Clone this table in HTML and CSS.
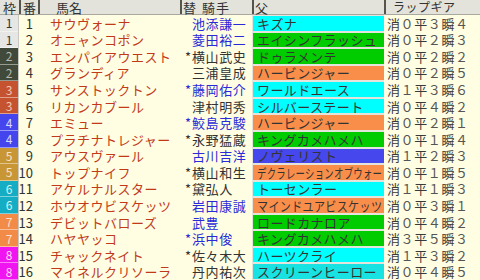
FILE: index.html
```html
<!DOCTYPE html>
<html lang="ja">
<head>
<meta charset="utf-8">
<link rel="stylesheet" href="styles.css">
</head>
<body>
<div class="board">
  <div class="row head">
    <div class="h h-waku">枠</div>
    <div class="h h-ban">番</div>
    <div class="h h-name">馬名</div>
    <div class="h h-jockey"><span class="h-mark">替</span><span class="h-jk">騎手</span></div>
    <div class="h h-sire">父</div>
    <div class="h h-gear">ラップギア</div>
  </div>

  <div class="row"><div class="waku w1">1</div><div class="ban">1</div><div class="name">サウヴォーナ</div><div class="jockey blue"><span class="mark"></span>池添謙一</div><div class="sire-cell"><div class="sire cyan"><span class="st">キズナ</span></div></div><div class="gear">消<i>０</i>平<i>３</i>瞬<i>４</i></div></div>
  <div class="row"><div class="waku w1">1</div><div class="ban">2</div><div class="name">オニャンコポン</div><div class="jockey blue"><span class="mark"></span>菱田裕二</div><div class="sire-cell"><div class="sire green"><span class="st">エイシンフラッシュ</span></div></div><div class="gear">消<i>０</i>平<i>２</i>瞬<i>３</i></div></div>
  <div class="row"><div class="waku w2">2</div><div class="ban">3</div><div class="name">エンパイアウエスト</div><div class="jockey"><span class="mark">*</span>横山武史</div><div class="sire-cell"><div class="sire green"><span class="st">ドゥラメンテ</span></div></div><div class="gear">消<i>０</i>平<i>２</i>瞬<i>２</i></div></div>
  <div class="row"><div class="waku w2">2</div><div class="ban">4</div><div class="name">グランディア</div><div class="jockey"><span class="mark"></span>三浦皇成</div><div class="sire-cell"><div class="sire orange"><span class="st">ハービンジャー</span></div></div><div class="gear">消<i>０</i>平<i>２</i>瞬<i>５</i></div></div>
  <div class="row"><div class="waku w3">3</div><div class="ban">5</div><div class="name">サンストックトン</div><div class="jockey blue"><span class="mark">*</span>藤岡佑介</div><div class="sire-cell"><div class="sire cyan"><span class="st">ワールドエース</span></div></div><div class="gear">消<i>１</i>平<i>３</i>瞬<i>６</i></div></div>
  <div class="row"><div class="waku w3">3</div><div class="ban">6</div><div class="name">リカンカブール</div><div class="jockey"><span class="mark"></span>津村明秀</div><div class="sire-cell"><div class="sire cyan"><span class="st">シルバーステート</span></div></div><div class="gear">消<i>０</i>平<i>４</i>瞬<i>２</i></div></div>
  <div class="row"><div class="waku w4">4</div><div class="ban">7</div><div class="name">エミュー</div><div class="jockey blue"><span class="mark">*</span>鮫島克駿</div><div class="sire-cell"><div class="sire orange"><span class="st">ハービンジャー</span></div></div><div class="gear">消<i>０</i>平<i>２</i>瞬<i>１</i></div></div>
  <div class="row"><div class="waku w4">4</div><div class="ban">8</div><div class="name">プラチナトレジャー</div><div class="jockey"><span class="mark">*</span>永野猛蔵</div><div class="sire-cell"><div class="sire green"><span class="st">キングカメハメハ</span></div></div><div class="gear">消<i>０</i>平<i>１</i>瞬<i>４</i></div></div>
  <div class="row"><div class="waku w5">5</div><div class="ban">9</div><div class="name">アウスヴァール</div><div class="jockey blue"><span class="mark"></span>古川吉洋</div><div class="sire-cell"><div class="sire blue-bg"><span class="st">ノヴェリスト</span></div></div><div class="gear">消<i>１</i>平<i>２</i>瞬<i>３</i></div></div>
  <div class="row"><div class="waku w5">5</div><div class="ban">10</div><div class="name">トップナイフ</div><div class="jockey"><span class="mark">*</span>横山和生</div><div class="sire-cell"><div class="sire orange"><span class="st fit-13">デクラレーションオブウォー</span></div></div><div class="gear">消<i>０</i>平<i>１</i>瞬<i>５</i></div></div>
  <div class="row"><div class="waku w6">6</div><div class="ban">11</div><div class="name">アケルナルスター</div><div class="jockey"><span class="mark">*</span>黛弘人</div><div class="sire-cell"><div class="sire cyan"><span class="st">トーセンラー</span></div></div><div class="gear">消<i>１</i>平<i>１</i>瞬<i>３</i></div></div>
  <div class="row"><div class="waku w6">6</div><div class="ban">12</div><div class="name">ホウオウビスケッツ</div><div class="jockey blue"><span class="mark"></span>岩田康誠</div><div class="sire-cell"><div class="sire orange"><span class="st fit-11">マインドユアビスケッツ</span></div></div><div class="gear">消<i>０</i>平<i>３</i>瞬<i>１</i></div></div>
  <div class="row"><div class="waku w7">7</div><div class="ban">13</div><div class="name">デビットバローズ</div><div class="jockey blue"><span class="mark"></span>武豊</div><div class="sire-cell"><div class="sire green"><span class="st">ロードカナロア</span></div></div><div class="gear">消<i>０</i>平<i>４</i>瞬<i>２</i></div></div>
  <div class="row"><div class="waku w7">7</div><div class="ban">14</div><div class="name">ハヤヤッコ</div><div class="jockey blue"><span class="mark">*</span>浜中俊</div><div class="sire-cell"><div class="sire green"><span class="st">キングカメハメハ</span></div></div><div class="gear">消<i>３</i>平<i>５</i>瞬<i>３</i></div></div>
  <div class="row"><div class="waku w8">8</div><div class="ban">15</div><div class="name">チャックネイト</div><div class="jockey"><span class="mark">*</span>佐々木大</div><div class="sire-cell"><div class="sire cyan"><span class="st">ハーツクライ</span></div></div><div class="gear">消<i>１</i>平<i>３</i>瞬<i>２</i></div></div>
  <div class="row"><div class="waku w8">8</div><div class="ban">16</div><div class="name">マイネルクリソーラ</div><div class="jockey"><span class="mark"></span>丹内祐次</div><div class="sire-cell"><div class="sire teal"><span class="st">スクリーンヒーロー</span></div></div><div class="gear">消<i>０</i>平<i>４</i>瞬<i>５</i></div></div>
</div>
</body>
</html>
```

FILE: styles.css
```css
html, body {
  margin: 0;
  padding: 0;
  background: #fffee2;
}

body {
  width: 480px;
  height: 280px;
  overflow: hidden;
  font-family: "Noto Sans CJK JP", "Noto Sans", sans-serif;
  color: #333;
}

.board {
  display: grid;
  grid-template-rows: 15px repeat(16, 1fr);
  height: 280px;
  width: 480px;
}

.row {
  display: grid;
  grid-template-columns: 19px 21px 140px 72px 132px 96px;
  min-height: 0;
}

.row > div {
  display: flex;
  align-items: center;
  white-space: nowrap;
  line-height: 1;
  min-width: 0;
}

/* header */
.head {
  background: #e3e3db;
  border-bottom: 1px solid #a8a8a0;
}

.h {
  font-size: 13px;
  color: #333;
  box-sizing: border-box;
}

.h-ban, .h-jockey, .h-sire, .h-gear {
  border-left: 2px solid #55554d;
}

.h-waku {
  justify-content: center;
}

.h-ban {
  justify-content: center;
  border-right: 2px solid #55554d;
}

.h-name {
  padding-left: 16px;
}

.h-jockey {
  padding-left: 1px;
}

.h-mark {
  margin-right: 6px;
}

.h-jk {
  letter-spacing: 1px;
}

.h-sire {
  padding-left: 1px;
}

.h-gear {
  padding-left: 7px;
  font-size: 12px;
  letter-spacing: 0.5px;
}

/* waku */
.waku {
  justify-content: center;
  font-size: 12px;
  color: #e4e4e4;
  box-shadow: inset 0 -1px 0 rgba(255, 255, 255, 0.45);
  border-right: 1px solid #c8c8c0;
}

.w1 { background: #e6e6e4; color: #333; }
.w2 { background: #414a3a; color: #b8b8b0; }
.w3 { background: #c6532f; color: #f0c8b8; }
.w4 { background: #4545ee; color: #d8d8ff; }
.w5 { background: #c99636; color: #f4e4c4; }
.w6 { background: #14adc4; color: #d4f0f4; }
.w7 { background: #f28a48; color: #fde0cc; }
.w8 { background: #f014f0; color: #ffd8ff; }

.ban {
  justify-content: flex-end;
  padding-right: 7px;
  font-size: 13px;
  color: #333;
}

.name {
  padding-left: 10px;
  font-size: 13px;
  letter-spacing: 0.5px;
  color: #c2391a;
}

.jockey {
  font-size: 13px;
  letter-spacing: 0.6px;
  color: #333;
}

.jockey.blue {
  color: #2a2ad8;
}

.mark {
  display: inline-block;
  width: 11px;
  text-align: right;
  letter-spacing: 0;
  margin-right: 1px;
}

.sire-cell {
  background: #e4e4dc;
  padding: 1px 0 1px 1px;
  box-sizing: border-box;
  align-items: stretch !important;
}

.sire {
  flex: 1;
  display: flex;
  align-items: center;
  padding-left: 4px;
  font-size: 13px;
  letter-spacing: 0.4px;
  color: #333;
  overflow: hidden;
}

.st {
  display: inline-block;
  transform-origin: left center;
}

.fit-11 {
  transform: scaleX(0.85);
}

.fit-13 {
  transform: scaleX(0.72);
}

.cyan { background: #00ffff; }
.green { background: #00cc00; }
.orange { background: #f98e4a; }
.blue-bg { background: #4747ee; }
.teal { background: #18e2e2; }

.gear {
  padding-left: 3px;
  font-size: 13px;
  letter-spacing: 0.6px;
  color: #3a3a3a;
}

.gear i {
  font-style: normal;
  color: #555;
}
```
